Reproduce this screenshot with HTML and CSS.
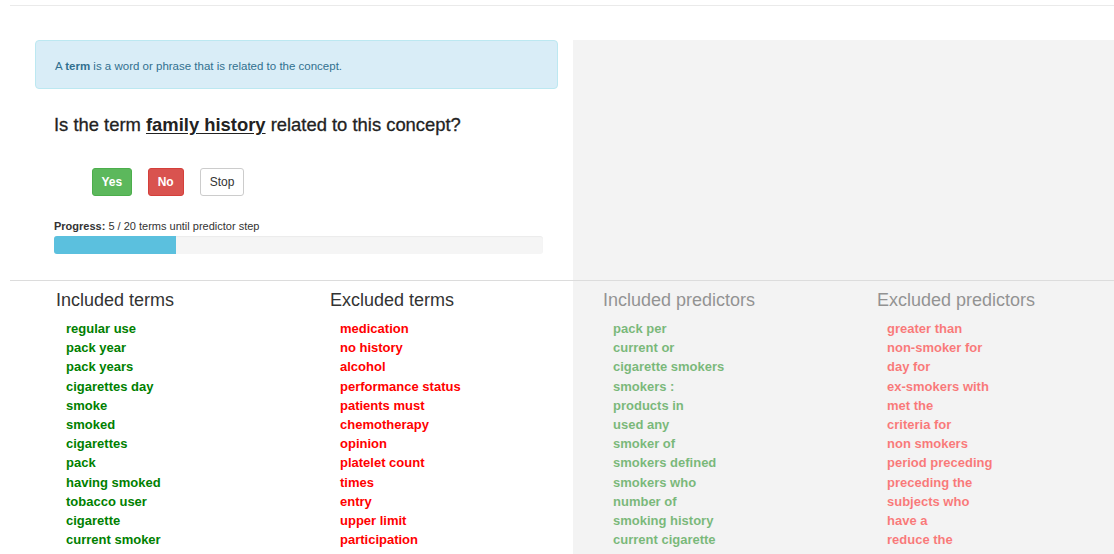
FILE: index.html
```html
<!DOCTYPE html>
<html lang="en">
<head>
<meta charset="utf-8">
<title>Concept terms</title>
<link rel="stylesheet" href="styles.css">
</head>
<body>
<div class="topbar"></div>

<section class="top">
  <div class="ask">
    <div class="alert">A <b>term</b> is a word or phrase that is related to the concept.</div>
    <div class="ask-body">
      <h3 class="question">Is the term <u class="term">family history</u> related to this concept?</h3>
      <div class="actions">
        <button class="btn btn-yes">Yes</button>
        <button class="btn btn-no">No</button>
        <button class="btn btn-stop">Stop</button>
      </div>
      <div class="progress-label"><b>Progress:</b> 5 / 20 terms until predictor step</div>
      <div class="progress"><div class="progress-bar" style="width: 25%"></div></div>
    </div>
  </div>
  <div class="side"></div>
</section>

<hr class="divider">

<section class="lists">
  <div class="half half-terms">
    <div class="col">
      <h4>Included terms</h4>
      <ul class="items included">
        <li>regular use</li>
        <li>pack year</li>
        <li>pack years</li>
        <li>cigarettes day</li>
        <li>smoke</li>
        <li>smoked</li>
        <li>cigarettes</li>
        <li>pack</li>
        <li>having smoked</li>
        <li>tobacco user</li>
        <li>cigarette</li>
        <li>current smoker</li>
        <li>ex-smoker</li>
      </ul>
    </div>
    <div class="col">
      <h4>Excluded terms</h4>
      <ul class="items excluded">
        <li>medication</li>
        <li>no history</li>
        <li>alcohol</li>
        <li>performance status</li>
        <li>patients must</li>
        <li>chemotherapy</li>
        <li>opinion</li>
        <li>platelet count</li>
        <li>times</li>
        <li>entry</li>
        <li>upper limit</li>
        <li>participation</li>
        <li>childbearing potential</li>
      </ul>
    </div>
  </div>
  <div class="half half-predictors">
    <div class="col">
      <h4>Included predictors</h4>
      <ul class="items included">
        <li>pack per</li>
        <li>current or</li>
        <li>cigarette smokers</li>
        <li>smokers :</li>
        <li>products in</li>
        <li>used any</li>
        <li>smoker of</li>
        <li>smokers defined</li>
        <li>smokers who</li>
        <li>number of</li>
        <li>smoking history</li>
        <li>current cigarette</li>
        <li>cigarettes per day</li>
      </ul>
    </div>
    <div class="col">
      <h4>Excluded predictors</h4>
      <ul class="items excluded">
        <li>greater than</li>
        <li>non-smoker for</li>
        <li>day for</li>
        <li>ex-smokers with</li>
        <li>met the</li>
        <li>criteria for</li>
        <li>non smokers</li>
        <li>period preceding</li>
        <li>preceding the</li>
        <li>subjects who</li>
        <li>have a</li>
        <li>reduce the</li>
        <li>months before</li>
      </ul>
    </div>
  </div>
</section>
</body>
</html>
```

FILE: styles.css
```css
html, body {
  margin: 0;
  padding: 0;
  background: #fff;
}

body {
  font-family: "Liberation Sans", Arial, sans-serif;
  color: #333;
  font-size: 13px;
  overflow: hidden;
  width: 1114px;
  height: 554px;
}

/* thin rule under the (empty) header strip */
.topbar {
  height: 5px;
  margin-left: 10px;
  border-bottom: 1px solid #eaeaea;
}

/* ---------- question area ---------- */
.top {
  display: flex;
  margin-top: 34px;
  margin-left: 10px;
}

.ask {
  width: 563px;
  flex: none;
  padding-bottom: 26px;
}

.side {
  flex: 1;
  background: #f3f3f3;
}

.alert {
  margin: 0 15px 0 25px;
  padding: 0 19px;
  height: 47px;
  line-height: 50px;
  background: #d9edf7;
  border: 1px solid #bce8f1;
  border-radius: 4px;
  color: #31708f;
  font-size: 11.5px;
}

.ask-body {
  padding-left: 44px;
  padding-right: 30px;
}

.question {
  margin: 24px 0 0;
  font-size: 18.4px;
  line-height: 24px;
  font-weight: normal;
  color: #222;
  -webkit-text-stroke: 0.3px #222;
}

.question .term {
  font-weight: bold;
  -webkit-text-stroke: 0;
  text-decoration: underline;
  text-underline-offset: 2px;
}

.actions {
  display: flex;
  gap: 16px;
  margin-top: 31px;
  padding-left: 38px;
}

.btn {
  font-family: inherit;
  font-size: 12px;
  line-height: 16px;
  padding: 5px 9px;
  border: 1px solid transparent;
  border-radius: 3px;
  cursor: pointer;
}

.btn-yes {
  background: #5cb85c;
  border-color: #4cae4c;
  color: #fff;
  font-weight: bold;
  padding: 5px 8.5px;
}

.btn-no {
  background: #d9534f;
  border-color: #d43f3a;
  color: #fff;
  font-weight: bold;
}

.btn-stop {
  background: #fff;
  border-color: #ccc;
  color: #333;
  padding: 5px 9px;
}

.progress-label {
  margin-top: 23px;
  font-size: 11px;
  line-height: 15px;
}

.progress {
  margin-top: 2px;
  height: 18px;
  background: #f5f5f5;
  border-radius: 3px;
  box-shadow: inset 0 1px 1px rgba(0, 0, 0, 0.04);
  overflow: hidden;
}

.progress-bar {
  height: 100%;
  background: #5bc0de;
}

/* ---------- term lists ---------- */
.divider {
  margin: 0 0 0 10px;
  border: 0;
  border-top: 1px solid #dcdcdc;
  height: 0;
  position: relative;
  z-index: 1;
}

.lists {
  display: flex;
  margin-left: 10px;
  height: 300px;
}

.half {
  display: flex;
  flex: none;
}

.half-terms {
  width: 517px;
  padding-left: 46px;
}

.half-predictors {
  flex: 1;
  background: #f3f3f3;
  padding-left: 30px;
}

.half-predictors .col {
  opacity: 0.5;
}

.col {
  width: 274px;
  flex: none;
}

.col h4 {
  margin: 8px 0 0;
  font-size: 18px;
  line-height: 22px;
  font-weight: normal;
  color: #333;
}

.items {
  list-style: none;
  margin: 8px 0 0;
  padding: 0 0 0 10px;
  font-size: 13px;
  font-weight: bold;
  line-height: 19.2px;
}

.items.included { color: #008000; }
.items.excluded { color: #ff0000; }
```
